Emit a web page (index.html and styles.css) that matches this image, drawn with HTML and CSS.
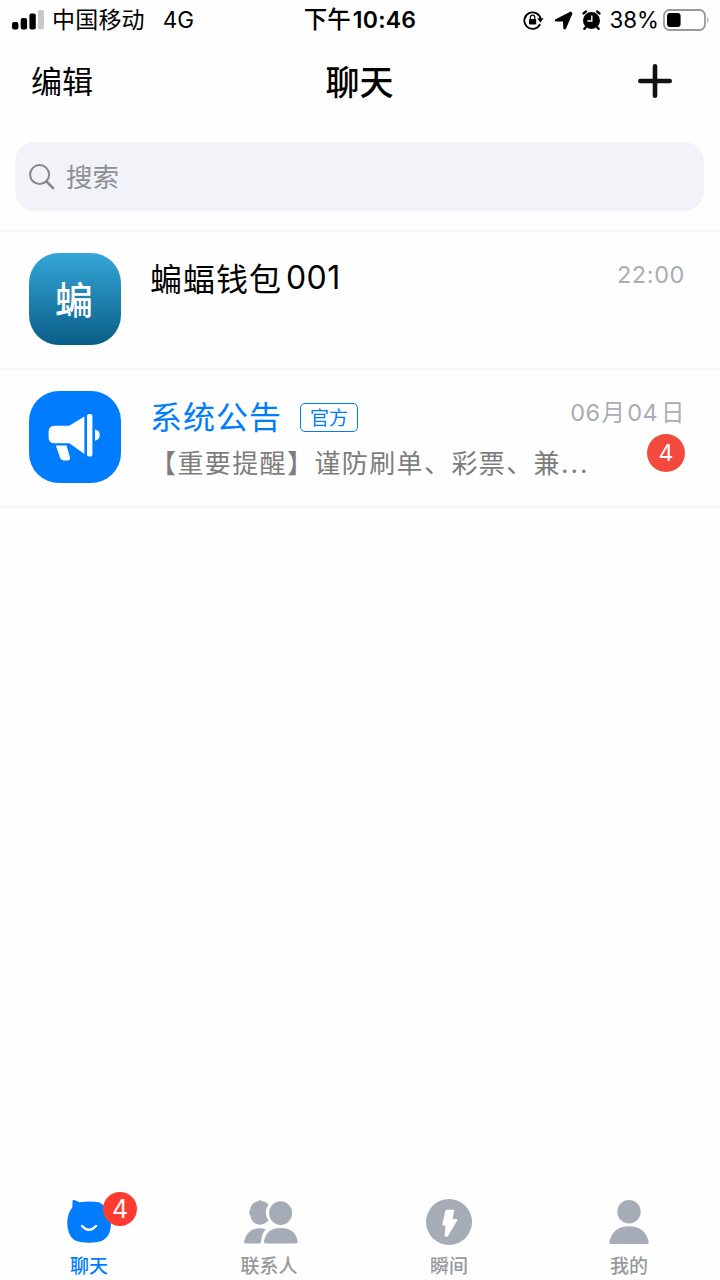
FILE: index.html
```html
<!DOCTYPE html>
<html lang="zh-CN">
<head>
<meta charset="utf-8">
<title>聊天</title>
<link rel="stylesheet" href="styles.css">
</head>
<body>
<div class="screen">
  <header class="status">
    <div class="status-left">
      <svg class="signal" width="33" height="20" viewBox="0 0 33 20">
        <rect x="0" y="12" width="6.4" height="7.6" rx="2"/>
        <rect x="8.7" y="8" width="6.4" height="11.6" rx="2"/>
        <rect x="17.4" y="3.6" width="6.4" height="16" rx="2"/>
        <rect x="26" y="0" width="6" height="19.6" rx="2" fill="#c8c8c8"/>
      </svg>
      <span class="carrier">中国移动</span>
      <span class="network">4G</span>
    </div>
    <div class="status-time"><span class="ampm">下午</span><span class="clock">10:46</span></div>
    <div class="status-right">
      <svg class="lock" width="21" height="20" viewBox="0 0 21 20">
        <path d="M16.8 14.8A8.3 8.3 0 1 1 17.7 8.8" fill="none" stroke="#000" stroke-width="1.8" stroke-linecap="round"/>
        <path d="M14.2 8.2h6.4l-3.2 4.3z"/>
        <rect x="6" y="9" width="7.2" height="5.6" rx="1"/>
        <path d="M7.4 9.4V7.4a2.2 2.2 0 0 1 4.4 0v2" fill="none" stroke="#000" stroke-width="1.2"/>
      </svg>
      <svg class="arrow" width="19" height="19" viewBox="0 0 19 19">
        <path d="M1.4 9 16.6 1.2 17.8 2.4 11.4 17.6H10L9.6 10H1.6z" stroke="#000" stroke-width="1.2" stroke-linejoin="round"/>
      </svg>
      <svg class="alarm" width="19" height="20" viewBox="0 0 19 20">
        <circle cx="9.5" cy="10.4" r="8.5"/>
        <path d="M1.6 3.4 3.8 1.6M17.4 3.4l-2.2-1.8M3.6 17.4l-1.2 1.4M15.4 17.4l1.2 1.4" stroke="#000" stroke-width="2.4" stroke-linecap="round"/>
        <path d="M9.8 5.4v5.6H5.4" stroke="#fff" stroke-width="1.4" fill="none"/>
      </svg>
      <span class="percent">38%</span>
      <svg class="battery" width="47" height="22" viewBox="0 0 47 22">
        <rect x="1" y="1" width="41" height="20" rx="5.5" fill="#fff" stroke="#999" stroke-width="1.8"/>
        <rect x="4" y="4" width="13.6" height="14" rx="3"/>
        <path d="M44.4 7.6q2.2 3.4 0 6.8z" fill="#999"/>
      </svg>
    </div>
  </header>

  <nav class="nav">
    <span class="edit">编辑</span>
    <h1 class="title">聊天</h1>
    <svg class="plus" width="34" height="34" viewBox="0 0 34 34">
      <path d="M17 2.3v29.4M2.3 17h29.4" stroke="#111" stroke-width="4.6" stroke-linecap="round"/>
    </svg>
  </nav>

  <div class="search">
    <svg class="search-icon" width="26" height="26" viewBox="0 0 26 26">
      <circle cx="10.6" cy="10.6" r="9.5" fill="none" stroke="#85868a" stroke-width="2"/>
      <path d="M17.5 17.5l6.6 6.6" stroke="#85868a" stroke-width="2.6" stroke-linecap="round"/>
    </svg>
    <span class="search-text">搜索</span>
  </div>

  <main class="chats">
    <section class="chat">
      <div class="avatar avatar-wallet"><span>蝙</span></div>
      <div class="body">
        <div class="name">蝙蝠钱包<span class="digits">001</span></div>
      </div>
      <div class="meta"><time class="time clock-time">22:00</time></div>
    </section>
    <section class="chat">
      <div class="avatar avatar-notice">
        <svg width="92" height="92" viewBox="0 0 92 92" fill="#fff">
          <path d="M25.6 34.7H40.2L55.4 25.4V62.9L40.4 52.3H25.6Q19.6 52.3 19.6 46.3V40.7Q19.6 34.7 25.6 34.7z"/>
          <path d="M26.8 54.6H37.5L41 66.4Q41.5 69.4 38.5 69.4H34.6Q32.2 69.4 31.2 67z"/>
          <rect x="58" y="23" width="5.4" height="42.6" rx="2.2"/>
          <path d="M66 38.4a5.8 5.8 0 0 1 0 11.4z"/>
        </svg>
      </div>
      <div class="body">
        <div class="name official">系统公告<span class="tag">官方</span></div>
        <div class="preview">【重要提醒】谨防刷单、彩票、兼<span class="dots">...</span></div>
      </div>
      <div class="meta"><time class="time">06<span class="unit">月</span>04<span class="unit last">日</span></time><span class="unread">4</span></div>
    </section>
  </main>

  <footer class="tabs">
    <div class="tab active">
      <div class="tab-icon">
        <svg width="46" height="48" viewBox="0 0 46 48">
          <path d="M6.6 2.8Q6.8 1.2 8.4 2L13.5 4.3Q24 2.8 33 4.3Q44 9 45 24Q45.5 37 37.5 42Q32 44.8 23 44.8Q14 44.8 8.2 42Q1.4 37.5 1.2 24Q1.6 15.5 6.3 9.5z" fill="#007dff"/>
          <path d="M16 28q7 7.6 14 0" fill="none" stroke="#fff" stroke-width="2.5" stroke-linecap="round"/>
        </svg>
        <span class="tab-badge">4</span>
      </div>
      <span class="tab-label">聊天</span>
    </div>
    <div class="tab">
      <div class="tab-icon contacts-icon">
        <svg width="56" height="48" viewBox="0 0 56 48" fill="#a5acb5">
          <path d="M7 12.2Q7.8 4.2 15.8 3Q17 .4 18 2.8Q22.5 3.1 25.6 6.2Q22.7 10.4 22.8 15.5Q23 19.6 25.5 22.6Q21.5 27 16.5 26.7Q8.6 26 7.4 17.5Q5.2 14.6 7 12.2z"/>
          <ellipse cx="37.6" cy="15.1" rx="11.5" ry="11.9"/>
          <path d="M2.6 45.4Q.6 45.4 1 43.4Q4.2 31 16 30.2Q19.6 30 22.8 31.3Q18.6 36 18 43.4Q17.9 45.4 16.8 45.4z"/>
          <path d="M23.2 45.4Q20.6 45.4 21 43Q23.6 30 37.8 30T54.6 43Q55 45.4 52.4 45.4z"/>
        </svg>
      </div>
      <span class="tab-label">联系人</span>
    </div>
    <div class="tab">
      <div class="tab-icon">
        <svg width="48" height="48" viewBox="0 0 48 48">
          <circle cx="24" cy="24" r="23" fill="#a5acb5"/>
          <path d="M21.2 12.6H28.4L26.6 21.8H31.6L22.2 37.8H20.4L21.4 26.6H18z" fill="#fff" stroke="#fff" stroke-width="1.6" stroke-linejoin="round"/>
        </svg>
      </div>
      <span class="tab-label">瞬间</span>
    </div>
    <div class="tab">
      <div class="tab-icon">
        <svg width="42" height="48" viewBox="0 0 42 48" fill="#a5acb5">
          <circle cx="21" cy="13.7" r="11.7"/>
          <path d="M3.2 46Q1 46 1.4 43.6Q4.8 28.5 21 28.2Q37.2 28.5 40.6 43.6Q41 46 38.8 46z"/>
        </svg>
      </div>
      <span class="tab-label">我的</span>
    </div>
  </footer>
</div>
</body>
</html>
```

FILE: styles.css
```css
* { box-sizing: border-box; }
body {
  margin: 0;
  background: #fff;
  color: #000;
  font-family: Inter, "Noto Sans CJK SC", sans-serif;
}
svg { display: block; flex: none; }
.screen {
  width: 720px;
  height: 1280px;
  display: flex;
  flex-direction: column;
  overflow: hidden;
  background: #fefefe;
  white-space: nowrap;
}

.status {
  height: 40px;
  display: grid;
  grid-template-columns: 260px 200px 260px;
  align-items: center;
  font-size: 23px;
  line-height: 40px;
}
.status-left { display: flex; align-items: center; padding-left: 12px; }
.signal { margin-right: 7px; }
.carrier { letter-spacing: .2px; }
.network { margin-left: 18px; font-size: 22.5px; }
.status-time { display: flex; justify-content: center; }
.ampm { font-weight: 500; font-size: 23.5px; }
.clock { font-weight: 600; font-size: 23px; margin-left: 2px; letter-spacing: .2px; }
.status-right { display: flex; align-items: center; justify-content: flex-end; padding-right: 10px; }
.arrow { margin-left: 10px; }
.alarm { margin-left: 9px; }
.percent { margin-left: 9px; font-size: 22.3px; }
.battery { margin-left: 4px; }

.nav {
  height: 82px;
  display: grid;
  grid-template-columns: 1fr auto 1fr;
  align-items: center;
  padding: 0 48px 0 31px;
}
.edit { font-size: 31px; padding-bottom: 4px; }
.title { margin: 0 0 0 16px; padding-top: 3px; font-size: 34px; line-height: 50px; font-weight: 500; }
.plus { justify-self: end; }

.search {
  margin: 20px 16px 19px 15px;
  height: 69px;
  flex: none;
  border-radius: 20px;
  background: #f2f3f8;
  display: flex;
  align-items: center;
  padding-left: 14px;
}
.search-text { margin-left: 11px; padding-bottom: 3px; font-size: 26.5px; color: #8e8f93; }

.chats { border-top: 2px solid #f8f8f9; }
.chat {
  height: 138px;
  display: flex;
  padding: 21px 35px 0 29px;
  border-bottom: 2px solid #f8f8f9;
}
.avatar {
  width: 92px;
  height: 92px;
  flex: none;
  border-radius: 30px;
  display: flex;
  align-items: center;
  justify-content: center;
}
.avatar-wallet {
  background: linear-gradient(#35a6d8, #095e86);
  color: #fff;
  font-size: 38px;
  font-weight: 500;
  padding: 0 2px 4px 0;
}
.avatar-notice { background: #007dff; }
.body { flex: 1; min-width: 0; padding-left: 29px; }
.name {
  display: flex;
  align-items: center;
  height: 52px;
  padding-bottom: 4px;
  font-size: 32px;
  letter-spacing: 1px;
}
.digits { margin-left: 4px; font-size: 32px; letter-spacing: .4px; }
.official { color: #007dff; }
.tag {
  width: 58px;
  height: 29px;
  margin: 4px 0 0 18px;
  border: 1.5px solid #007dff;
  border-radius: 5px;
  font-size: 19px;
  line-height: 29px;
  letter-spacing: 0;
  text-align: center;
}
.preview {
  height: 40px;
  line-height: 42px;
  font-size: 26px;
  letter-spacing: 1.4px;
  color: #7d7d7d;
}
.dots { letter-spacing: 2px; }
.meta { display: flex; flex-direction: column; align-items: flex-end; }
.time { height: 43px; line-height: 44px; font-size: 23.5px; color: #aaadb5; letter-spacing: .4px; }
.clock-time { letter-spacing: .6px; }
.unit { margin: 0 2px 0 1px; }
.last { margin: 0 0 0 3px; }
.unread {
  width: 38px;
  height: 38px;
  border-radius: 50%;
  background: #f24a3d;
  color: #fff;
  font-size: 23px;
  line-height: 38px;
  text-align: center;
}

.tabs {
  margin-top: auto;
  height: 82px;
  display: grid;
  grid-template-columns: repeat(4, 180px);
  margin-left: -1px;
}
.tab { display: flex; flex-direction: column; align-items: center; color: #97999d; }
.tab-icon { position: relative; height: 50px; }
.contacts-icon { margin-left: 4px; }
.tab-badge {
  position: absolute;
  left: 37px;
  top: -6px;
  width: 34px;
  height: 34px;
  border-radius: 50%;
  background: #ff3b30;
  color: #fff;
  font-size: 25px;
  line-height: 34px;
  text-align: center;
}
.tab-label { font-size: 19px; line-height: 38px; font-weight: 500; }
.active { color: #007dff; }
```
